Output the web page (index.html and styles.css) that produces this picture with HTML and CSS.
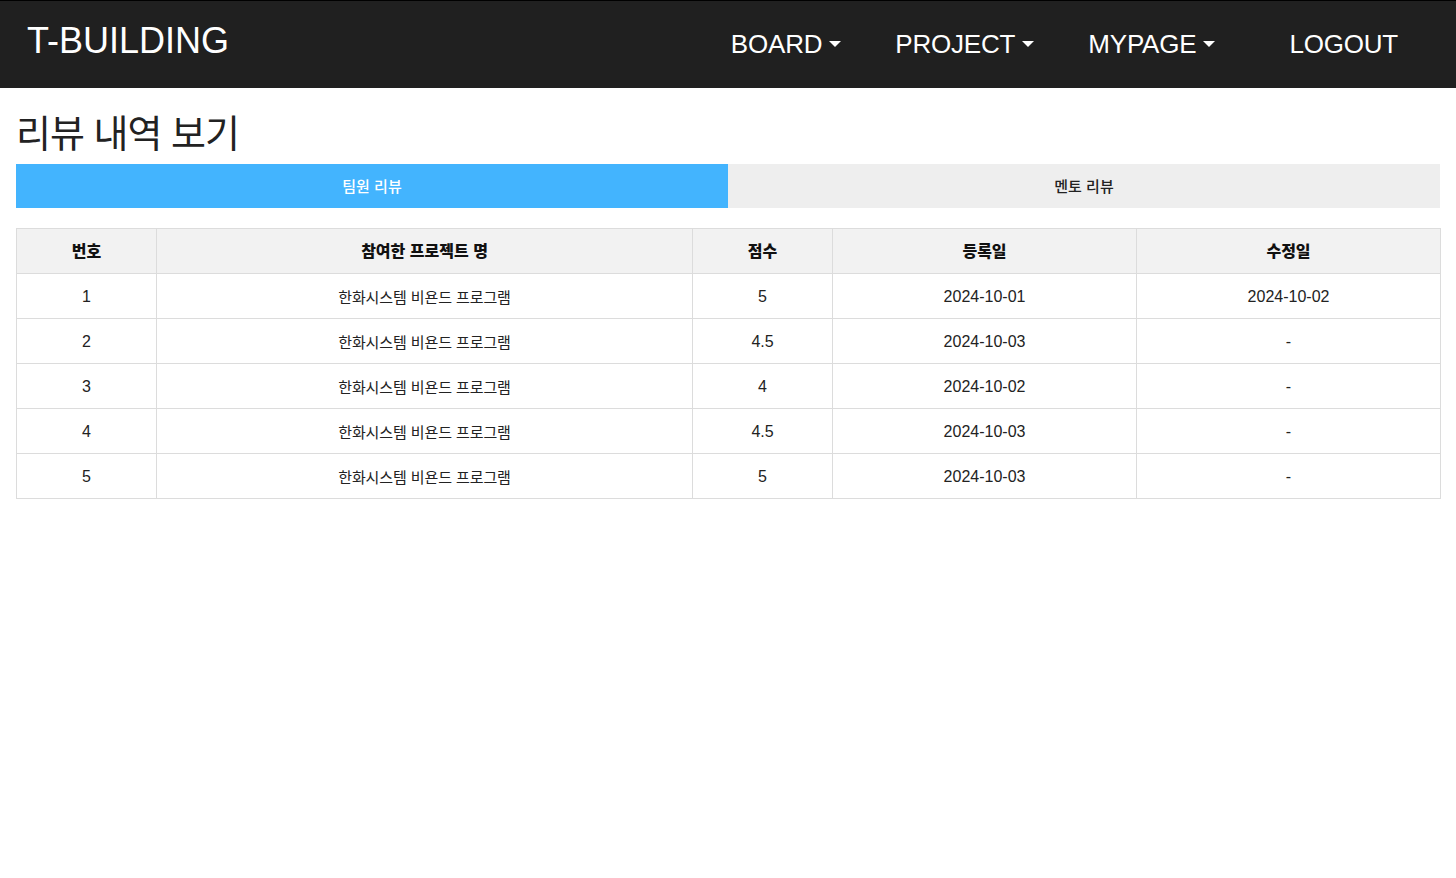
FILE: index.html
```html
<!DOCTYPE html>
<html lang="ko">
<head>
<meta charset="utf-8">
<title>리뷰 내역 보기</title>
<link rel="stylesheet" href="styles.css">
</head>
<body>
<header class="navbar">
  <a class="brand" href="#">T-BUILDING</a>
  <nav class="menu">
    <a class="menu-item dropdown" href="#">BOARD</a>
    <a class="menu-item dropdown" href="#">PROJECT</a>
    <a class="menu-item dropdown" href="#">MYPAGE</a>
    <a class="menu-item logout" href="#">LOGOUT</a>
  </nav>
</header>
<main class="content">
  <h1 class="title">리뷰 내역 보기</h1>
  <div class="tabs">
    <button class="tab active">팀원 리뷰</button>
    <button class="tab">멘토 리뷰</button>
  </div>
  <table class="reviews">
    <colgroup>
      <col class="c-no"><col class="c-proj"><col class="c-score"><col class="c-date"><col class="c-date">
    </colgroup>
    <thead>
      <tr><th>번호</th><th>참여한 프로젝트 명</th><th>점수</th><th>등록일</th><th>수정일</th></tr>
    </thead>
    <tbody>
      <tr><td>1</td><td class="ko">한화시스템 비욘드 프로그램</td><td>5</td><td>2024-10-01</td><td>2024-10-02</td></tr>
      <tr><td>2</td><td class="ko">한화시스템 비욘드 프로그램</td><td>4.5</td><td>2024-10-03</td><td>-</td></tr>
      <tr><td>3</td><td class="ko">한화시스템 비욘드 프로그램</td><td>4</td><td>2024-10-02</td><td>-</td></tr>
      <tr><td>4</td><td class="ko">한화시스템 비욘드 프로그램</td><td>4.5</td><td>2024-10-03</td><td>-</td></tr>
      <tr><td>5</td><td class="ko">한화시스템 비욘드 프로그램</td><td>5</td><td>2024-10-03</td><td>-</td></tr>
    </tbody>
  </table>
</main>
</body>
</html>
```
FILE: styles.css
```css
* { box-sizing: border-box; }
body {
  margin: 0;
  font-family: "Liberation Sans", "Noto Sans CJK KR", sans-serif;
  color: #212121;
  background: #fff;
}
.navbar {
  height: 88px;
  background: #202020;
  border-top: 1px solid #000;
  display: flex;
  align-items: center;
  justify-content: space-between;
  padding: 0 58px 0 27px;
}
.brand {
  color: #fff;
  text-decoration: none;
  font-size: 36px;
  margin-top: -8px;
}
.menu {
  display: flex;
  align-items: center;
}
.menu-item {
  color: #fff;
  text-decoration: none;
  font-size: 26px;
  letter-spacing: -0.2px;
  display: flex;
  align-items: center;
  margin-top: -1px;
}
.menu-item + .menu-item { margin-left: 54px; }
.menu-item.logout { margin-left: 74px; }
.dropdown::after {
  content: "";
  margin-left: 7px;
  border-top: 6px solid #fff;
  border-left: 6px solid transparent;
  border-right: 6px solid transparent;
}
.content {
  padding: 0 16px;
}
.title {
  margin: 9px 0 0 0;
  font-family: "Noto Sans CJK KR", sans-serif;
  font-weight: 400;
  font-size: 38px;
  line-height: 67px;
  letter-spacing: -1px;
  color: #222;
}
.tabs {
  display: flex;
  height: 44px;
}
.tab {
  flex: 1;
  border: 0;
  margin: 0;
  padding: 0 0 2px;
  background: #eeeeee;
  color: #222;
  font-family: "Noto Sans CJK KR", sans-serif;
  font-size: 15px;
  font-weight: 500;
}
.tab.active {
  background: #43b4fe;
  color: #fff;
}
.reviews {
  margin-top: 20px;
  width: 100%;
  border-collapse: collapse;
  table-layout: fixed;
}
.c-no, .c-score { width: 140px; }
.c-proj { width: 536px; }
.c-date { width: 304px; }
.reviews th, .reviews td {
  border: 1px solid #dcdcdc;
  height: 45px;
  text-align: center;
  padding: 0;
}
.reviews th {
  background: #f2f2f2;
  font-family: "Noto Sans CJK KR", sans-serif;
  font-weight: 900;
  font-size: 16px;
  color: #111;
  padding-bottom: 2px;
}
.reviews td {
  font-size: 16px;
  color: #222;
  padding-top: 2px;
}
.reviews td.ko {
  font-family: "Noto Sans CJK KR", sans-serif;
  font-size: 15px;
  letter-spacing: -0.1px;
  padding-top: 0;
}
```
